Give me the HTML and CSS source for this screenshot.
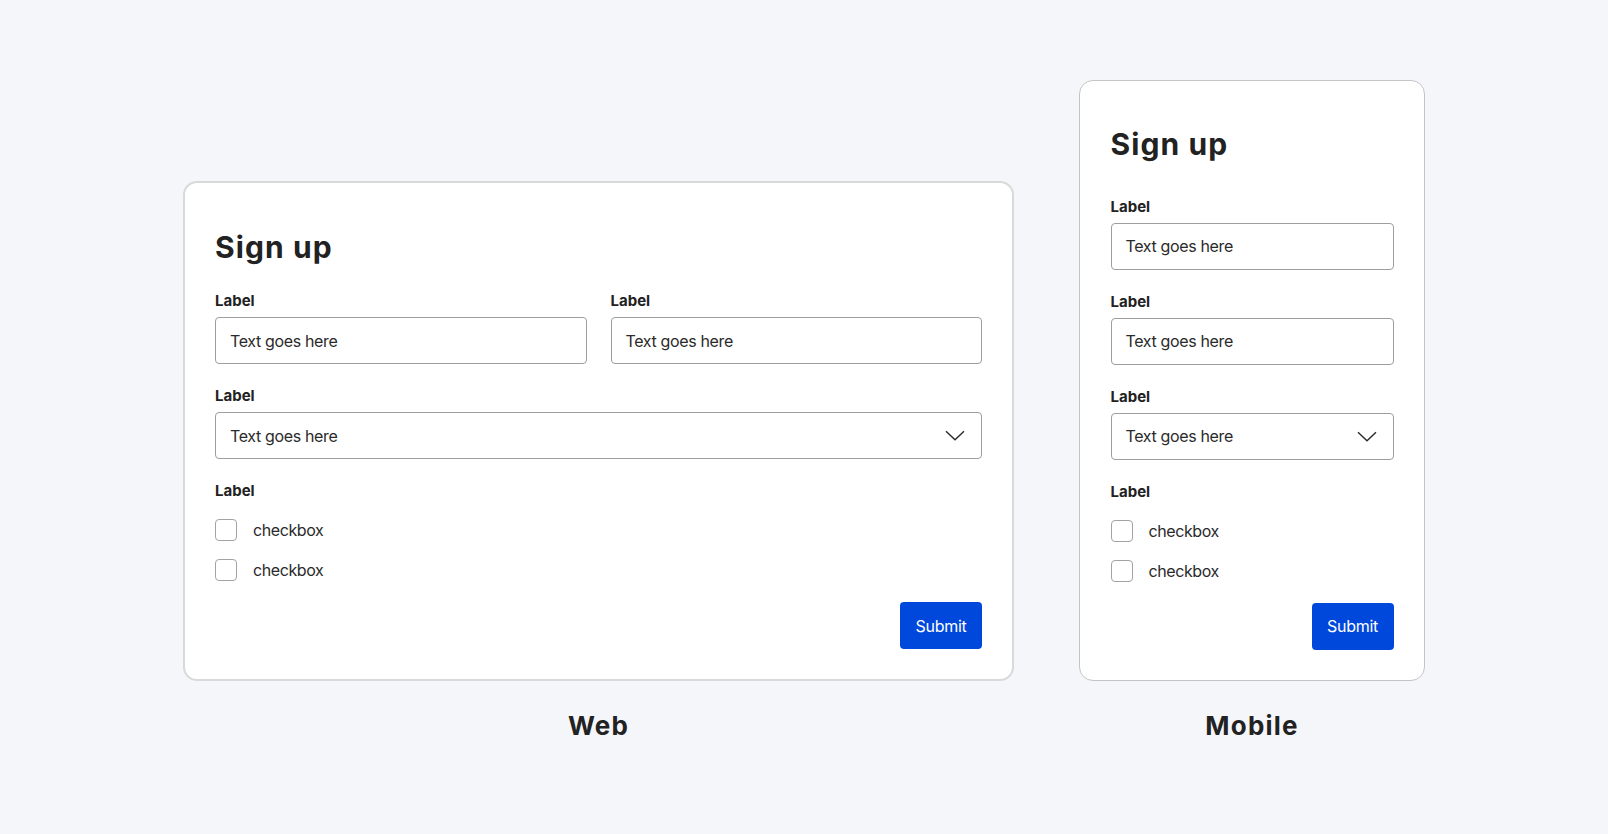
FILE: index.html
```html
<!DOCTYPE html>
<html lang="en">
<head>
<meta charset="utf-8">
<title>Sign up – Web and Mobile</title>
<link rel="stylesheet" href="styles.css">
</head>
<body>
<main class="showcase">
  <section class="variant">
    <form class="card card--web">
      <h1 class="card__title card__title--web">Sign up</h1>
      <div class="row-2">
        <div class="field">
          <label class="field__label">Label</label>
          <div class="input"><span class="input__text">Text goes here</span></div>
        </div>
        <div class="field">
          <label class="field__label">Label</label>
          <div class="input"><span class="input__text">Text goes here</span></div>
        </div>
      </div>
      <div class="field">
        <label class="field__label">Label</label>
        <div class="input input--select"><span class="input__text">Text goes here</span>
          <svg class="chevron" width="20" height="11" viewBox="0 0 20 11"><path d="M1 1.2 L10 9.8 L19 1.2" fill="none" stroke="#2a2a2a" stroke-width="1.4"/></svg>
        </div>
      </div>
      <div class="group">
        <div class="field__label">Label</div>
        <div class="checks">
          <div class="check"><span class="check__box"></span><span class="check__text">checkbox</span></div>
          <div class="check"><span class="check__box"></span><span class="check__text">checkbox</span></div>
        </div>
      </div>
      <div class="actions"><button type="button" class="btn">Submit</button></div>
    </form>
    <div class="caption">Web</div>
  </section>

  <section class="variant">
    <form class="card card--mobile">
      <h1 class="card__title card__title--mobile">Sign up</h1>
      <div class="field">
        <label class="field__label">Label</label>
        <div class="input"><span class="input__text">Text goes here</span></div>
      </div>
      <div class="field">
        <label class="field__label">Label</label>
        <div class="input"><span class="input__text">Text goes here</span></div>
      </div>
      <div class="field">
        <label class="field__label">Label</label>
        <div class="input input--select"><span class="input__text">Text goes here</span>
          <svg class="chevron" width="20" height="11" viewBox="0 0 20 11"><path d="M1 1.2 L10 9.8 L19 1.2" fill="none" stroke="#2a2a2a" stroke-width="1.4"/></svg>
        </div>
      </div>
      <div class="group">
        <div class="field__label">Label</div>
        <div class="checks">
          <div class="check"><span class="check__box"></span><span class="check__text">checkbox</span></div>
          <div class="check"><span class="check__box"></span><span class="check__text">checkbox</span></div>
        </div>
      </div>
      <div class="actions"><button type="button" class="btn">Submit</button></div>
    </form>
    <div class="caption">Mobile</div>
  </section>
</main>
</body>
</html>
```

FILE: styles.css
```css
* { box-sizing: border-box; }
html, body {
  margin: 0;
  padding: 0;
  background: #f5f6fa;
  font-family: Inter, "Noto Sans", "Liberation Sans", sans-serif;
  color: #222222;
}
.showcase {
  display: flex;
  justify-content: center;
  align-items: flex-end;
  gap: 65px;
  padding-top: 80px;
}
.variant {
  display: flex;
  flex-direction: column;
  align-items: stretch;
}
.card {
  background: #ffffff;
  border: 2px solid #d9d9dc;
  border-radius: 14px;
  padding: 30px;
  display: flex;
  flex-direction: column;
}
.card--web { width: 831px; }
.card--mobile { width: 346px; border: 1.5px solid #c4c4c8; padding: 30.5px; }
.card__title {
  margin: 0;
  font-size: 30px;
  line-height: 36px;
  font-weight: 700;
  letter-spacing: 1.1px;
  color: #222222;
}
.card__title--web { margin: 16px 0 26px; }
.card__title--mobile { margin: 14px 0 35px; }
.row-2 {
  display: grid;
  grid-template-columns: 1fr 1fr;
  gap: 24px;
  margin-bottom: 22px;
}
.field {
  display: flex;
  flex-direction: column;
  margin-bottom: 22px;
}
.row-2 .field { margin-bottom: 0; }
.field__label {
  display: block;
  font-size: 15px;
  line-height: 20px;
  font-weight: 700;
  color: #222222;
  margin-bottom: 6px;
}
.input {
  height: 47px;
  border: 1px solid #9e9e9e;
  border-radius: 4px;
  padding: 0 14px;
  display: flex;
  align-items: center;
  justify-content: space-between;
}
.input__text {
  font-size: 16px;
  letter-spacing: -0.35px;
  color: #2a2a2a;
}
.input--select { padding-right: 16px; }
.chevron { display: block; }
.group .field__label { margin-bottom: 18px; }
.checks {
  display: flex;
  flex-direction: column;
  gap: 18px;
}
.check {
  display: flex;
  align-items: center;
  gap: 16px;
  height: 22px;
}
.check__box {
  width: 22px;
  height: 22px;
  border: 1px solid #a3a3a3;
  border-radius: 4px;
  background: #fff;
}
.check__text {
  font-size: 16px;
  letter-spacing: -0.4px;
  color: #2a2a2a;
}
.actions {
  display: flex;
  justify-content: flex-end;
  margin-top: 21px;
}
.btn {
  height: 47px;
  width: 82px;
  border: none;
  border-radius: 4px;
  background: #0048db;
  color: #ffffff;
  font-family: Inter, "Noto Sans", "Liberation Sans", sans-serif;
  font-size: 16px;
  letter-spacing: -0.3px;
  padding: 0;
}
.caption {
  margin-top: 29px;
  text-align: center;
  font-size: 26px;
  line-height: 32px;
  font-weight: 700;
  letter-spacing: 1.2px;
  color: #222222;
}
```
